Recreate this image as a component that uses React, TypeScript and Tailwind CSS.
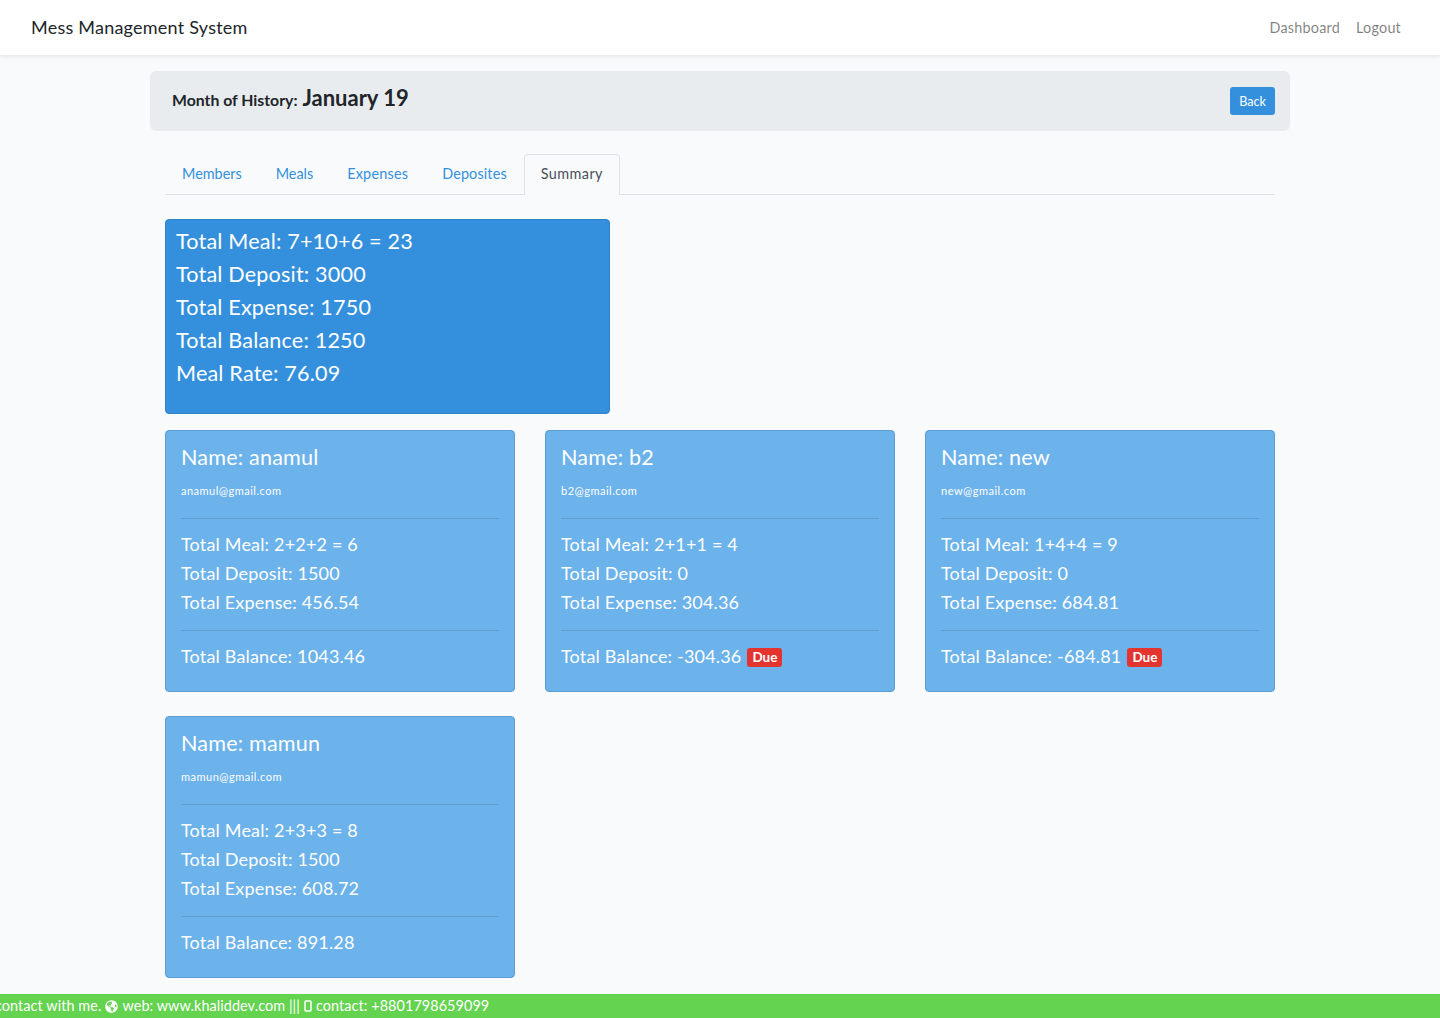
import { FaGlobeAmericas } from "react-icons/fa"

const members = [
    { name: "anamul", email: "anamul@gmail.com", meal: "2+2+2 = 6", deposit: "1500", expense: "456.54", balance: "1043.46", due: false },
    { name: "b2", email: "b2@gmail.com", meal: "2+1+1 = 4", deposit: "0", expense: "304.36", balance: "-304.36", due: true },
    { name: "new", email: "new@gmail.com", meal: "1+4+4 = 9", deposit: "0", expense: "684.81", balance: "-684.81", due: true },
    { name: "mamun", email: "mamun@gmail.com", meal: "2+3+3 = 8", deposit: "1500", expense: "608.72", balance: "891.28", due: false },
]

function MemberCard({ m }: { m: (typeof members)[number] }) {
    return (
        <div className="h-[262px] rounded border border-[#5c9ccf] bg-[#6cb2eb] px-[15px] pt-[13px] text-white tracking-[0.012em]">
            <h4 className="mb-[7px] text-[21.6px] leading-[26px]">Name: {m.name}</h4>
            <p className="mt-[13px] text-[11px] leading-[16px] tracking-[0.045em]">{m.email}</p>
            <hr className="mt-[19px] mb-[14px] border-t border-[#5c9ccf]" />
            <p className="mb-[7px] text-[18px] leading-[22px]">Total Meal: {m.meal}</p>
            <p className="mb-[7px] text-[18px] leading-[22px]">Total Deposit: {m.deposit}</p>
            <p className="text-[18px] leading-[22px]">Total Expense: {m.expense}</p>
            <hr className="mt-[17px] mb-[14px] border-t border-[#5c9ccf]" />
            <p className="flex items-center text-[18px] leading-[22px]">
                Total Balance: {m.balance}
                {m.due && (
                    <span className="mt-[3px] ml-[6px] rounded-[3px] bg-[#e3342f] px-[5px] text-[13.5px] leading-[19px] font-bold tracking-normal">Due</span>
                )}
            </p>
        </div>
    )
}

export default function App() {
    return (
        <div className="min-h-[1018px] overflow-hidden bg-[#f8fafc] font-['Lato','Noto_Sans',sans-serif] text-[14.4px] text-[#212529]">
            {/* Navbar */}
            <nav className="flex h-[55px] items-center justify-between bg-white pr-[39px] pl-[31px] shadow-[0_2px_4px_rgba(0,0,0,0.075)]">
                <span className="text-[18px] tracking-[0.013em]">Mess Management System</span>
                <div className="flex gap-4 tracking-[0.015em] text-[#00000080]">
                    <span>Dashboard</span>
                    <span>Logout</span>
                </div>
            </nav>

            <main className="mx-auto w-[1140px] pt-4">
                {/* Month heading */}
                <div className="flex h-[60px] items-center justify-between rounded-md bg-[#e9ecef] pr-[15px] pl-[22px]">
                    <h5 className="-mt-[7px] flex items-baseline gap-[5px] text-[15.8px] font-bold">
                        Month of History:
                        <span className="text-[22px]">January 19</span>
                    </h5>
                    <button className="h-[28px] w-[45px] rounded-[3px] bg-[#3490dc] pt-[2px] text-[12.6px] text-white">Back</button>
                </div>

                <div className="px-[15px]">
                    {/* Tabs */}
                    <ul className="mt-[23px] flex h-[41px] border-b border-[#dee2e6] text-[#3490dc]">
                        <li className="px-[17px] pt-[9px]">Members</li>
                        <li className="px-[17px] pt-[9px]">Meals</li>
                        <li className="px-[17px] pt-[9px] tracking-[0.015em]">Expenses</li>
                        <li className="px-[17px] pt-[9px] tracking-[0.01em]">Deposites</li>
                        <li className="h-[41px] rounded-t border border-b-0 border-[#dee2e6] bg-[#f8fafc] px-4 pt-[8px] tracking-[0.03em] text-[#495057]">Summary</li>
                    </ul>

                    {/* Totals */}
                    <div className="mt-6 h-[195px] w-[445px] rounded border border-[#2f82c6] bg-[#3490dc] px-[10px] pt-[8px] text-[21.6px] leading-[26px] tracking-[0.008em] text-white">
                        <p className="mb-[7px]">Total Meal: 7+10+6 = 23</p>
                        <p className="mb-[7px]">Total Deposit: 3000</p>
                        <p className="mb-[7px]">Total Expense: 1750</p>
                        <p className="mb-[7px]">Total Balance: 1250</p>
                        <p>Meal Rate: 76.09</p>
                    </div>

                    {/* Members */}
                    <div className="mt-4 grid grid-cols-3 gap-x-[30px] gap-y-6">
                        {members.map((m) => (
                            <MemberCard key={m.name} m={m} />
                        ))}
                    </div>
                </div>
            </main>

            {/* Footer marquee */}
            <footer className="mt-4 -ml-[5px] flex h-6 items-center gap-1 whitespace-nowrap bg-[#64d34f] tracking-[0.006em] text-white">
                <span>contact with me.</span>
                <FaGlobeAmericas className="h-[13px] w-[13px]" />
                <span>web: www.khaliddev.com |||</span>
                <svg viewBox="0 0 8 12" className="h-3 w-2" fill="none" stroke="currentColor" strokeWidth="1.5">
                    <rect x="1" y="1" width="6" height="10" rx="1" />
                </svg>
                <span>contact: +8801798659099</span>
            </footer>
        </div>
    )
}
